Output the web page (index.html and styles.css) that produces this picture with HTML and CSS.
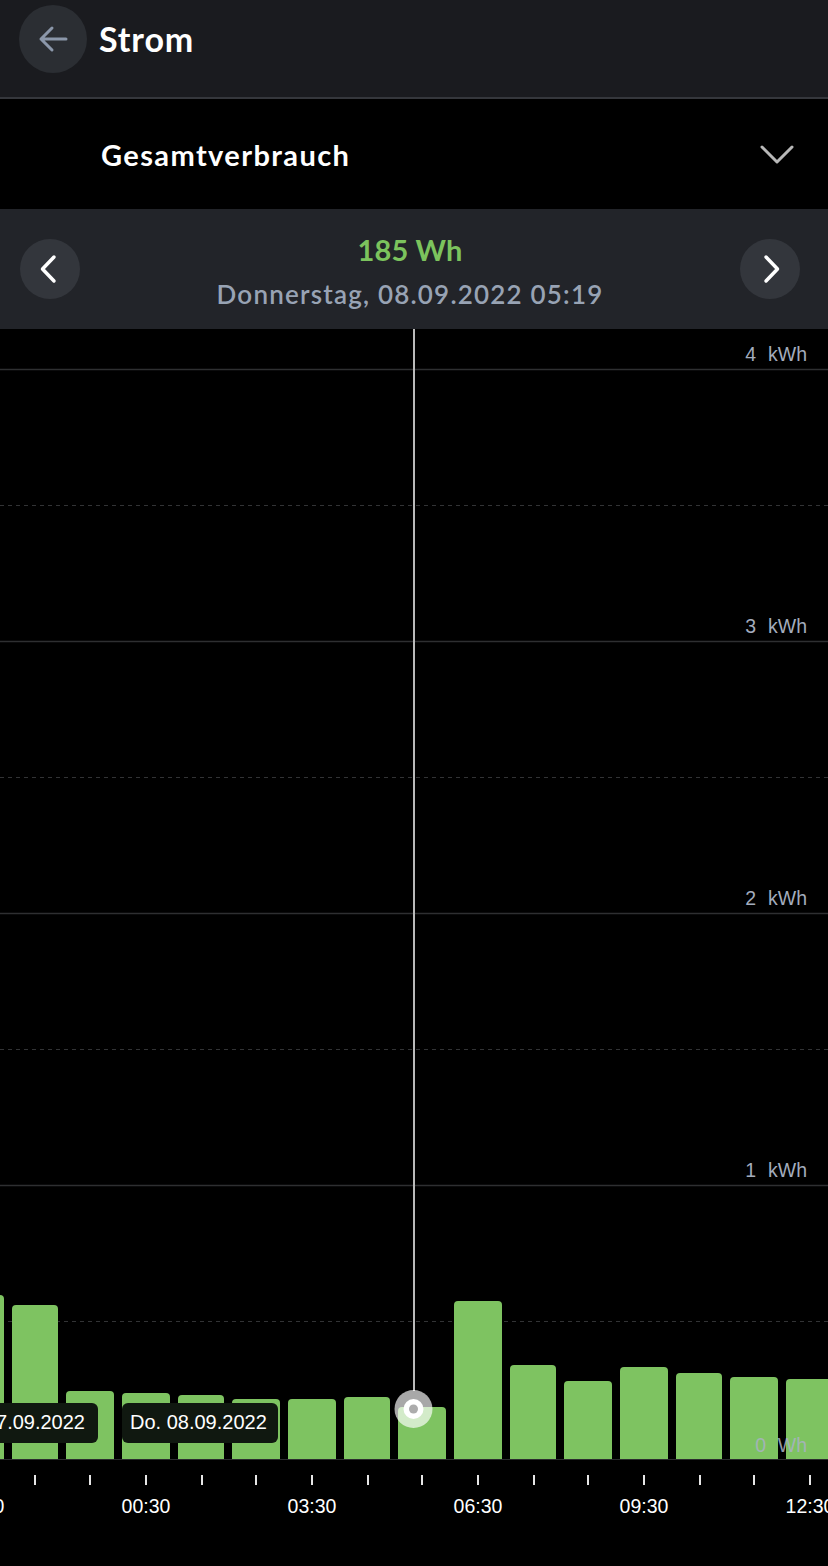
FILE: index.html
```html
<!DOCTYPE html>
<html lang="de">
<head>
<meta charset="utf-8">
<title>Strom</title>
<link rel="stylesheet" href="styles.css">
</head>
<body>
<div class="app">
  <header class="topbar">
    <button class="back-btn" aria-label="Zurück">
      <svg width="68" height="68" viewBox="0 0 68 68"><path d="M47 34H22M33 23L22 34L33 45" fill="none" stroke="#8b97aa" stroke-width="3" stroke-linecap="round" stroke-linejoin="round"/></svg>
    </button>
    <h1 class="title">Strom</h1>
  </header>

  <div class="dropdown">
    <span class="dropdown-label">Gesamtverbrauch</span>
    <svg class="dropdown-chevron" width="36" height="22" viewBox="0 0 36 22"><path d="M3 3L18 18L33 3" fill="none" stroke="#b8b8b8" stroke-width="3" stroke-linecap="round" stroke-linejoin="round"/></svg>
  </div>

  <div class="nav">
    <button class="nav-btn" aria-label="Zurück">
      <svg width="60" height="60" viewBox="0 0 60 60"><path d="M34 18L22.5 30L34 42" fill="none" stroke="#fff" stroke-width="3.5" stroke-linecap="round" stroke-linejoin="round"/></svg>
    </button>
    <div class="nav-center">
      <div class="value">185 Wh</div>
      <div class="date">Donnerstag, 08.09.2022 05:19</div>
    </div>
    <button class="nav-btn" aria-label="Weiter">
      <svg width="60" height="60" viewBox="0 0 60 60"><path d="M26 18L37.5 30L26 42" fill="none" stroke="#fff" stroke-width="3.5" stroke-linecap="round" stroke-linejoin="round"/></svg>
    </button>
  </div>

  <svg class="chart" width="828" height="1237" viewBox="0 0 828 1237">
    <g class="grid">
      <line class="solid" x1="0" x2="828" y1="40.5" y2="40.5"/>
      <line class="dash" x1="0" x2="828" y1="176.5" y2="176.5"/>
      <line class="solid" x1="0" x2="828" y1="312.5" y2="312.5"/>
      <line class="dash" x1="0" x2="828" y1="448.5" y2="448.5"/>
      <line class="solid" x1="0" x2="828" y1="584.5" y2="584.5"/>
      <line class="dash" x1="0" x2="828" y1="720.5" y2="720.5"/>
      <line class="solid" x1="0" x2="828" y1="856.5" y2="856.5"/>
      <line class="dash" x1="0" x2="828" y1="992.5" y2="992.5"/>
    </g>
    <g class="ylabels">
      <text x="756" y="32" text-anchor="end">4</text><text x="807" y="32" text-anchor="end">kWh</text>
      <text x="756" y="304" text-anchor="end">3</text><text x="807" y="304" text-anchor="end">kWh</text>
      <text x="756" y="576" text-anchor="end">2</text><text x="807" y="576" text-anchor="end">kWh</text>
      <text x="756" y="848" text-anchor="end">1</text><text x="807" y="848" text-anchor="end">kWh</text>
    </g>
    <g class="bars">
      <rect x="-44" y="966" width="48" height="170" rx="4"/>
      <rect x="12" y="976" width="46" height="160" rx="4"/>
      <rect x="66" y="1062" width="48" height="74" rx="4"/>
      <rect x="122" y="1064" width="48" height="72" rx="4"/>
      <rect x="178" y="1066" width="46" height="70" rx="4"/>
      <rect x="232" y="1070" width="48" height="66" rx="4"/>
      <rect x="288" y="1070" width="48" height="66" rx="4"/>
      <rect x="344" y="1068" width="46" height="68" rx="4"/>
      <rect x="398" y="1078" width="48" height="58" rx="4"/>
      <rect x="454" y="972" width="48" height="164" rx="4"/>
      <rect x="510" y="1036" width="46" height="100" rx="4"/>
      <rect x="564" y="1052" width="48" height="84" rx="4"/>
      <rect x="620" y="1038" width="48" height="98" rx="4"/>
      <rect x="676" y="1044" width="46" height="92" rx="4"/>
      <rect x="730" y="1048" width="48" height="88" rx="4"/>
      <rect x="786" y="1050" width="48" height="86" rx="4"/>
    </g>
    <rect class="below" x="0" y="1130" width="828" height="107"/>
    <line class="baseline" x1="0" x2="828" y1="1130.5" y2="1130.5"/>
    <g class="ylabels zero">
      <text x="766" y="1123" text-anchor="end">0</text><text x="807" y="1123" text-anchor="end">Wh</text>
    </g>
    <g class="ticks">
      <line x1="35" x2="35" y1="1146" y2="1156"/>
      <line x1="90" x2="90" y1="1146" y2="1156"/>
      <line x1="146" x2="146" y1="1146" y2="1156"/>
      <line x1="202" x2="202" y1="1146" y2="1156"/>
      <line x1="256" x2="256" y1="1146" y2="1156"/>
      <line x1="312" x2="312" y1="1146" y2="1156"/>
      <line x1="368" x2="368" y1="1146" y2="1156"/>
      <line x1="422" x2="422" y1="1146" y2="1156"/>
      <line x1="478" x2="478" y1="1146" y2="1156"/>
      <line x1="534" x2="534" y1="1146" y2="1156"/>
      <line x1="588" x2="588" y1="1146" y2="1156"/>
      <line x1="644" x2="644" y1="1146" y2="1156"/>
      <line x1="700" x2="700" y1="1146" y2="1156"/>
      <line x1="754" x2="754" y1="1146" y2="1156"/>
      <line x1="810" x2="810" y1="1146" y2="1156"/>
    </g>
    <g class="xlabels">
      <text x="-20" y="1184" text-anchor="middle">21:30</text>
      <text x="146" y="1184" text-anchor="middle">00:30</text>
      <text x="312" y="1184" text-anchor="middle">03:30</text>
      <text x="478" y="1184" text-anchor="middle">06:30</text>
      <text x="644" y="1184" text-anchor="middle">09:30</text>
      <text x="810" y="1184" text-anchor="middle">12:30</text>
    </g>
    <g class="daytags">
      <rect x="-58" y="1074" width="156" height="40" rx="6"/>
      <text x="85" y="1100" text-anchor="end">Mi. 07.09.2022</text>
      <rect x="122" y="1074" width="156" height="40" rx="6"/>
      <text x="130" y="1100">Do. 08.09.2022</text>
    </g>
    <line class="cursor" x1="414" x2="414" y1="0" y2="1062"/>
    <g class="knob">
      <circle class="outer" cx="413.5" cy="1080" r="19"/>
      <circle class="ring" cx="413.5" cy="1080" r="10"/>
      <circle class="dot" cx="413.5" cy="1080" r="4.5"/>
    </g>
  </svg>
</div>
</body>
</html>
```

FILE: styles.css
```css
html, body {
  margin: 0;
  padding: 0;
  background: #000;
}

.app {
  width: 828px;
  height: 1566px;
  overflow: hidden;
  background: #000;
  font-family: Lato, "Open Sans", sans-serif;
  color: #fff;
}

button {
  border: 0;
  padding: 0;
  margin: 0;
  background: none;
  font: inherit;
  cursor: pointer;
}

.topbar {
  height: 92px;
  padding: 5px 0 0 19px;
  background: #1a1b1f;
  border-bottom: 2px solid #35373c;
  display: flex;
  align-items: flex-start;
  gap: 12px;
}

.back-btn {
  width: 68px;
  height: 68px;
  border-radius: 50%;
  background: #2b2e33;
  display: flex;
  align-items: center;
  justify-content: center;
  flex: none;
}

.back-btn svg { display: block; }

.title {
  margin: 0;
  height: 68px;
  line-height: 68px;
  font-size: 34px;
  font-weight: 700;
  color: #fff;
  letter-spacing: 0.9px;
}

.dropdown {
  height: 110px;
  display: flex;
  align-items: center;
  justify-content: space-between;
  padding: 0 33px 0 101px;
  background: #000;
}

.dropdown-label {
  font-size: 29px;
  font-weight: 700;
  color: #fff;
  letter-spacing: 1.4px;
}

.dropdown-chevron { display: block; margin-top: 2px; }

.nav {
  height: 120px;
  background: #222429;
  display: flex;
  align-items: center;
  justify-content: space-between;
  padding: 0 28px 0 20px;
}

.nav-btn {
  width: 60px;
  height: 60px;
  border-radius: 50%;
  background: #33363c;
  display: flex;
  align-items: center;
  justify-content: center;
  flex: none;
}

.nav-btn svg { display: block; }

.nav-center {
  flex: 1;
  text-align: center;
  padding-top: 6px;
}

.value {
  font-size: 29px;
  line-height: 44px;
  font-weight: 700;
  color: #7cc35d;
  letter-spacing: 0.2px;
}

.date {
  font-size: 26px;
  line-height: 44px;
  font-weight: 600;
  color: #98a3b4;
  letter-spacing: 1.2px;
}

.chart {
  display: block;
  font-family: "Liberation Sans", Arial, sans-serif;
}

.grid .solid {
  stroke: #2e2f31;
  stroke-width: 1.5;
}

.grid .dash {
  stroke: #323335;
  stroke-width: 1.2;
  stroke-dasharray: 4 4;
}

.ylabels text {
  font-size: 19.5px;
  fill: #a3acbd;
}

.ylabels.zero text {
  fill: #aab2c4;
  opacity: 0.85;
}

.bars rect {
  fill: #7ec361;
}

.below { fill: #000; }

.baseline {
  stroke: #2c2d2f;
  stroke-width: 1;
}

.ticks line {
  stroke: #e6e6e6;
  stroke-width: 2;
}

.xlabels text {
  font-size: 19.5px;
  fill: #fff;
}

.daytags rect {
  fill: #101810;
}

.daytags text {
  font-size: 20px;
  fill: #fff;
}

.cursor {
  stroke: #bababa;
  stroke-width: 2;
}

.knob .outer { fill: rgba(255, 255, 255, 0.66); }
.knob .ring { fill: #fff; }
.knob .dot { fill: #acacac; }
```
